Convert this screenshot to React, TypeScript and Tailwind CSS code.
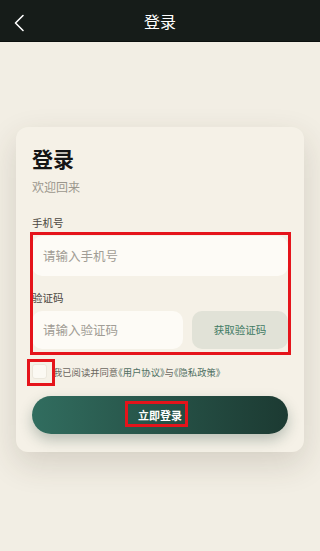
import React from 'react';

const App: React.FC = () => {
  return (
    <div
      className="min-h-[551px] w-[320px] bg-[#f2eee4] text-[#1a1a1a]"
      style={{ fontFamily: '"Noto Sans CJK SC", "Noto Sans", sans-serif' }}
    >
      {/* Top bar */}
      <div className="relative flex h-[42px] items-center justify-center border-b border-[#0c100e] bg-[#161c19]">
        <svg
          className="absolute left-[13px] top-[14px]"
          width="12"
          height="18"
          viewBox="0 0 12 18"
          fill="none"
        >
          <path d="M10 1.5 L2.5 9 L10 16.5" stroke="#ffffff" strokeWidth="1.6" strokeLinecap="round" strokeLinejoin="round" />
        </svg>
        <span className="text-[16px] text-white">登录</span>
      </div>

      {/* Card */}
      <div className="px-4 pt-[85px]">
        <div className="relative rounded-[12px] bg-[#f5f1e7] px-4 pb-[18px] pt-[17px] shadow-[0_12px_32px_rgba(60,50,30,0.16)]">
          <h1 className="text-[21px] font-bold leading-[28px] text-[#151515]">登录</h1>
          <p className="mt-[7px] text-[12px] leading-[16px] text-[#9b978d]">欢迎回来</p>

          <label className="mt-5 block text-[10.5px] leading-[16px] text-[#4a4741]">手机号</label>
          <div className="mt-[5px] flex h-[40px] items-center rounded-[10px] bg-[#fdfbf6] px-[11px]">
            <span className="text-[12.5px] text-[#a19d95]">请输入手机号</span>
          </div>

          <label className="mt-[14px] block text-[10.5px] leading-[16px] text-[#4a4741]">验证码</label>
          <div className="mt-[5px] flex h-[38px] gap-[9px]">
            <div className="flex flex-1 items-center rounded-[10px] bg-[#fdfbf6] px-[11px]">
              <span className="text-[12.5px] text-[#a19d95]">请输入验证码</span>
            </div>
            <div className="flex w-[96px] items-center justify-center rounded-[10px] bg-[#e1e2d7]">
              <span className="text-[10.5px] text-[#3f7a63]">获取验证码</span>
            </div>
          </div>

          <div className="mt-[15px] flex items-center gap-[6px]">
            <div className="h-[15px] w-[15px] shrink-0 rounded-[3px] border border-[#ebe7dc] bg-[#fbf9f3]" />
            <p className="whitespace-nowrap text-[9.3px] leading-[14px] text-[#6b675f] [font-feature-settings:'halt']">
              我已阅读并同意<span className="text-[#4f6f62]">《用户协议》</span>与<span className="text-[#4f6f62]">《隐私政策》</span>
            </p>
          </div>

          <button className="mt-[17px] flex h-[38px] w-full items-center justify-center rounded-full bg-gradient-to-r from-[#316d5f] to-[#1c3a32] shadow-[0_6px_14px_rgba(30,60,50,0.28)]">
            <span className="text-[11px] font-bold text-white">立即登录</span>
          </button>

          {/* annotation highlights */}
          <div className="pointer-events-none absolute left-[14px] top-[105px] h-[123px] w-[261px] border-[3px] border-[#e5141b]" />
          <div className="pointer-events-none absolute left-[11px] top-[232px] h-[27px] w-[28px] border-[3px] border-[#e5141b]" />
          <div className="pointer-events-none absolute left-[109px] top-[274px] h-[26px] w-[63px] border-[3px] border-[#e5141b]" />
        </div>
      </div>
    </div>
  );
};

export default App;
